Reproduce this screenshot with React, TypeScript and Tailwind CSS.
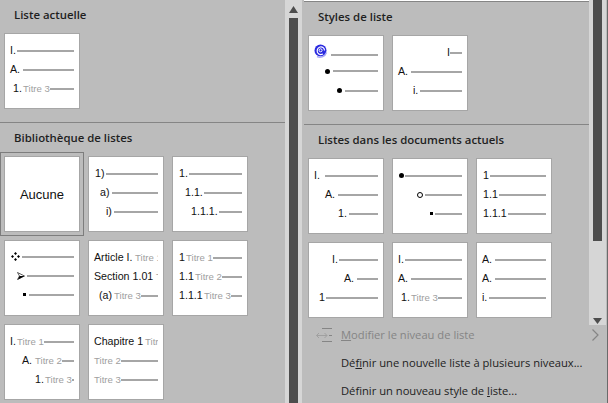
import React from "react";

type Row = { cell: string; label: React.ReactNode; sub?: string; noLine?: boolean; line?: string };

const Diamonds = () => (
  <svg width="9" height="9" viewBox="0 0 9 9" className="block -mt-px">
    <path d="M4.5 0 6 1.5 4.5 3 3 1.5Z M1.5 3 3 4.5 1.5 6 0 4.5Z M7.5 3 9 4.5 7.5 6 6 4.5Z M4.5 6 6 7.5 4.5 9 3 7.5Z" fill="#000" />
  </svg>
);

const Arrow = () => (
  <svg width="8" height="8" viewBox="0 0 8 8" className="block">
    <path d="M0.5 0.5 7.5 4 0.5 7.5 2.5 4Z" fill="#fff" stroke="#333" strokeWidth="0.8" />
    <path d="M1 7.5 7.5 4 2.5 4Z" fill="#000" />
  </svg>
);

const Swirl = () => (
  <svg width="15" height="14" viewBox="0 0 15 14" className="block -mt-[4px]">
    <circle cx="6.5" cy="6.5" r="6" fill="#2a2ae0" />
    <path d="M12.5 8.5C11 13 6 14 3 12.5" fill="none" stroke="#a9a9f5" strokeWidth="1.5" />
    <path d="M10.5 6.5C10.5 3.5 8 2.5 6 3 3.5 3.7 2.7 6.5 3.5 8.5 4.5 10.5 7 10.8 9 10" fill="none" stroke="#fff" strokeWidth="1.2" />
    <circle cx="6.6" cy="6.3" r="1.5" fill="none" stroke="#fff" strokeWidth="1" />
  </svg>
);

const Dot = () => <div className="h-[5px] w-[5px] rounded-full bg-black" />;
const Ring = () => <div className="h-[6px] w-[6px] rounded-full border border-black" />;
const Square = () => <div className="h-[3px] w-[3px] bg-black" />;

function ListCard({ rows, top = "pt-[7px]" }: { rows: Row[]; top?: string }) {
  return (
    <div className={`h-[76px] w-[76px] overflow-hidden border border-[#a6a6a6] bg-white pr-[5px] ${top}`}>
      {rows.map((row, i) => (
        <div key={i} className="flex h-[19px] items-center overflow-hidden whitespace-nowrap text-[10.67px] leading-none text-[#111]">
          <div className={`shrink-0 ${row.cell}`}>{row.label}</div>
          {row.sub && <span className="shrink-0 text-[9.6px] text-[#a0a0a0]">{row.sub}</span>}
          {!row.noLine && <div className={`h-[2px] flex-1 bg-[#a6a6a6] ${row.line ?? ""}`} />}
        </div>
      ))}
    </div>
  );
}

function Heading({ children }: { children: React.ReactNode }) {
  return (
    <div className="mb-[3px] flex h-[30px] items-center pl-[14px] [font-family:'Open_Sans',sans-serif] text-[11.4px] font-semibold text-[#1f1f1f]">
      {children}
    </div>
  );
}

function Scrollbar({ className, thumb, down }: { className: string; thumb: string; down?: boolean }) {
  return (
    <div className={`flex w-[17px] shrink-0 flex-col items-center bg-[#d6d6d6] ${className}`}>
      <div className={`w-[9px] bg-[#4d4d4d] ${thumb}`} />
      {down && (
        <svg width="9" height="6" viewBox="0 0 9 6" className="mt-auto mb-px block">
          <path d="M0 0H9L4.5 6Z" fill="#4d4d4d" />
        </svg>
      )}
    </div>
  );
}

function MiddleScrollbar() {
  return (
    <div className="flex h-[403px] w-[17px] shrink-0 flex-col items-center bg-[#d6d6d6] pt-[6px]">
      <svg width="9" height="7" viewBox="0 0 9 7" className="block">
        <path d="M4.5 0 9 7H0Z" fill="#4d4d4d" />
      </svg>
      <div className="mt-[5px] w-[9px] flex-1 bg-[#4d4d4d]" />
    </div>
  );
}

function LevelIcon() {
  return (
    <svg width="16" height="15" viewBox="0 0 16 15" className="block">
      <path d="M6 0.5H16 M6 13.5H16 M13 7.5H16" stroke="#858585" strokeWidth="1" fill="none" />
      <path d="M0.5 7.5H11 M3 5 0.5 7.5 3 10 M8.5 5 11 7.5 8.5 10" stroke="#a0a0a0" strokeWidth="1" fill="none" />
    </svg>
  );
}

export default function App() {
  return (
    <div className="flex h-[403px] w-[608px] overflow-hidden bg-[#bcbcbc] [font-family:'Liberation_Sans',Arial,sans-serif]">
      {/* left panel */}
      <div className="w-[285px] shrink-0">
        <div className="h-[122px]">
          <Heading>Liste actuelle</Heading>
          <div className="pl-[4px]">
            <ListCard
              rows={[
                { cell: "w-[12px] pl-[5px]", label: "I." },
                { cell: "w-[18px] pl-[5px]", label: "A." },
                { cell: "w-[18px] pl-[8px]", label: "1.", sub: "Titre 3" },
              ]}
            />
          </div>
        </div>
        <div className="h-px bg-[#858585]" />
        <Heading>Bibliothèque de listes</Heading>
        <div className="grid grid-cols-[76px_76px_76px] gap-2 pl-[4px]">
          <div className="relative">
            <div className="absolute -inset-[4px] border border-[#7d7d7d]" />
            <div className="relative flex h-[76px] w-[76px] items-center justify-center border border-[#a6a6a6] bg-white pt-px text-[13px] text-[#111]">
              Aucune
            </div>
          </div>
          <ListCard
            rows={[
              { cell: "w-[17px] pl-[6px]", label: "1)" },
              { cell: "w-[23px] pl-[11px]", label: "a)" },
              { cell: "w-[25px] pl-[17px]", label: "i)" },
            ]}
          />
          <ListCard
            rows={[
              { cell: "w-[16px] pl-[6px]", label: "1." },
              { cell: "w-[31px] pl-[12px]", label: "1.1." },
              { cell: "w-[46px] pl-[18px]", label: "1.1.1." },
            ]}
          />
          <ListCard
            top="pt-[6px]"
            rows={[
              { cell: "w-[17px] pl-[6px]", label: <Diamonds /> },
              { cell: "w-[22px] pl-[12px]", label: <Arrow /> },
              { cell: "w-[24px] pl-[18px]", label: <Square /> },
            ]}
          />
          <ListCard
            rows={[
              { cell: "w-[46px] pl-[5px]", label: "Article I.", sub: "Titre 1", noLine: true },
              { cell: "w-[67px] pl-[5px]", label: "Section 1.01", sub: "Titre 2", noLine: true },
              { cell: "w-[25px] pl-[10px]", label: "(a)", sub: "Titre 3" },
            ]}
          />
          <ListCard
            rows={[
              { cell: "w-[13px] pl-[6px]", label: "1", sub: "Titre 1" },
              { cell: "w-[22px] pl-[6px]", label: "1.1", sub: "Titre 2" },
              { cell: "w-[31px] pl-[6px]", label: "1.1.1", sub: "Titre 3" },
            ]}
          />
          <ListCard
            rows={[
              { cell: "w-[12px] pl-[5px]", label: "I.", sub: "Titre 1" },
              { cell: "w-[30px] pl-[17px]", label: "A.", sub: "Titre 2" },
              { cell: "w-[40px] pl-[30px]", label: "1.", sub: "Titre 3" },
            ]}
          />
          <ListCard
            rows={[
              { cell: "w-[56px] pl-[5px]", label: "Chapitre 1", sub: "Titre 1", noLine: true },
              { cell: "w-[5px]", label: "", sub: "Titre 2" },
              { cell: "w-[5px]", label: "", sub: "Titre 3" },
            ]}
          />
        </div>
      </div>

      <MiddleScrollbar />

      {/* right panel */}
      <div className="ml-[2px] w-[302px] shrink-0">
        <div className="flex h-[325px]">
          <div className="w-[285px] shrink-0">
            <div className="h-px bg-white" />
            <div className="h-px bg-[#858585]" />
            <div className="h-[122px]">
              <Heading>Styles de liste</Heading>
              <div className="flex gap-2 pl-[4px]">
                <ListCard
                  rows={[
                    { cell: "w-[22px] pl-[5px]", label: <Swirl />, line: "mt-[5px]" },
                    { cell: "w-[24px] pl-[16px]", label: <Dot />, line: "-mt-px" },
                    { cell: "w-[36px] pl-[28px]", label: <Dot /> },
                  ]}
                />
                <ListCard
                  rows={[
                    { cell: "w-[57px] pl-[54px]", label: "I" },
                    { cell: "w-[18px] pl-[5px]", label: "A." },
                    { cell: "w-[27px] pl-[20px]", label: "i." },
                  ]}
                />
              </div>
            </div>
            <div className="h-px bg-[#858585]" />
            <Heading>Listes dans les documents actuels</Heading>
            <div className="grid grid-cols-[76px_76px_76px] gap-2 pl-[4px]">
              <ListCard
                rows={[
                  { cell: "w-[16px] pl-[5px]", label: "I." },
                  { cell: "w-[29px] pl-[16px]", label: "A." },
                  { cell: "w-[40px] pl-[29px]", label: "1." },
                ]}
              />
              <ListCard
                rows={[
                  { cell: "w-[12px] pl-[6px]", label: <Dot /> },
                  { cell: "w-[32px] pl-[24px]", label: <Ring /> },
                  { cell: "w-[42px] pl-[37px]", label: <Square /> },
                ]}
              />
              <ListCard
                rows={[
                  { cell: "w-[13px] pl-[6px]", label: "1" },
                  { cell: "w-[22px] pl-[6px]", label: "1.1" },
                  { cell: "w-[31px] pl-[6px]", label: "1.1.1" },
                ]}
              />
              <ListCard
                rows={[
                  { cell: "w-[30px] pl-[23px]", label: "I." },
                  { cell: "w-[48px] pl-[35px]", label: "A." },
                  { cell: "w-[17px] pl-[10px]", label: "1" },
                ]}
              />
              <ListCard
                rows={[
                  { cell: "w-[12px] pl-[5px]", label: "I." },
                  { cell: "w-[18px] pl-[5px]", label: "A." },
                  { cell: "w-[18px] pl-[8px]", label: "1.", sub: "Titre 3" },
                ]}
              />
              <ListCard
                rows={[
                  { cell: "w-[18px] pl-[5px]", label: "A." },
                  { cell: "w-[18px] pl-[5px]", label: "A." },
                  { cell: "w-[12px] pl-[5px]", label: "i." },
                ]}
              />
            </div>
          </div>
          <Scrollbar className="h-[325px]" thumb="h-[241px]" down />
        </div>

        {/* menu */}
        <div className="flex flex-col gap-2 [font-family:'Open_Sans',sans-serif] text-[11.2px] text-[#222]">
          <div className="flex h-5 items-center text-[#858585]">
            <div className="w-[37px] shrink-0 pl-[12px]">
              <LevelIcon />
            </div>
            <span className="w-[251px]">
              <span className="underline">M</span>odifier le niveau de liste
            </span>
            <svg width="7" height="12" viewBox="0 0 7 12" className="block">
              <path d="M0.5 0.5 6 6 0.5 11.5" fill="none" stroke="#858585" strokeWidth="1.2" />
            </svg>
          </div>
          <div className="flex h-5 items-center pl-[37px]">
            <span>
              Dé<span className="underline">f</span>inir une nouvelle liste à plusieurs niveaux...
            </span>
          </div>
          <div className="flex h-5 items-center pl-[37px]">
            <span>
              Définir un nouveau style de <span className="underline">l</span>iste...
            </span>
          </div>
        </div>
      </div>
      <div className="ml-[1px] w-px shrink-0 bg-[#6a6a6a]" />
    </div>
  );
}
